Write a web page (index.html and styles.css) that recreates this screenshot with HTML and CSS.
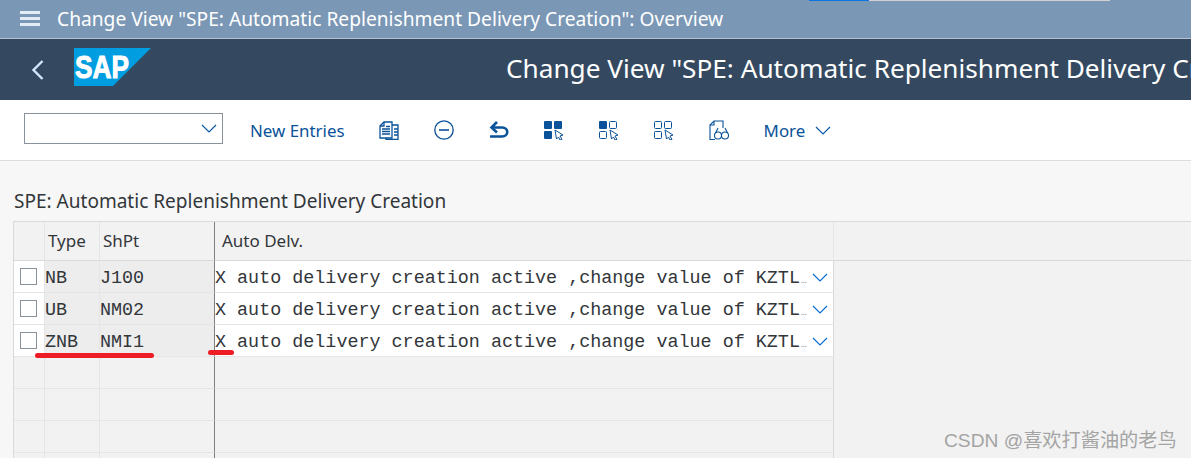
FILE: index.html
```html
<!DOCTYPE html>
<html lang="en">
<head>
  <meta charset="UTF-8">
  <meta name="viewport" content="width=device-width, initial-scale=1.0">
  <title>Change View</title>
  <link rel="stylesheet" href="styles.css">
</head>
<body>
  <div class="load-line"><span class="load-blue"></span><span class="load-gray"></span></div>

  <!-- Window title -->
  <div class="title-bar">
    <div class="burger"><span></span><span></span><span></span></div>
    <span class="title-text">Change View "SPE: Automatic Replenishment Delivery Creation": Overview</span>
  </div>

  <!-- Shell header -->
  <div class="shell">
    <svg class="back" width="14" height="20" viewBox="0 0 14 20"><path d="M11.500 1 L2.500 10 L11.500 19" fill="none" stroke="#d1e8ff" stroke-width="2.400"/></svg>
    <svg class="logo" width="77" height="38" viewBox="0 0 77 38">
      <polygon points="0,0 77,0 39,38 0,38" fill="#009de0"/>
      <text x="1" y="30" class="logo-text" textLength="54" lengthAdjust="spacingAndGlyphs">SAP</text>
    </svg>
    <div class="shell-title">Change View "SPE: Automatic Replenishment Delivery Creation": Overview</div>
  </div>

  <!-- Toolbar -->
  <div class="toolbar">
    <div class="combo">
      <svg width="16" height="9" viewBox="0 0 16 9"><path d="M1 1 L8 8 L15 1" fill="none" stroke="#0a5ca8" stroke-width="1.200"/></svg>
    </div>
    <span class="tool-link new-entries">New Entries</span>
    <svg class="tool-icon copy-icon" width="20" height="20" viewBox="0 0 20 20" fill="none" stroke="#0a5299" stroke-width="1.300">
      <path d="M1 6 L5 2 L13 2 L13 18 L1 18 Z"/><path d="M5 2 L5 6 L1 6"/>
      <path d="M13 5 L19 5 L19 19.300 L7 19.300 L7 18"/>
      <path d="M3 9 H11 M3 11.500 H11 M3 14 H11 M7 6.500 H11 M15 9 H19 M15 12 H19 M15 15 H19"/>
    </svg>
    <svg class="tool-icon minus-icon" width="20" height="20" viewBox="0 0 20 20" fill="none" stroke="#0a5299" stroke-width="1.300">
      <circle cx="10" cy="10" r="9.200"/><path d="M5 10 H15" stroke-width="1.600"/>
    </svg>
    <svg class="tool-icon undo-icon" width="20" height="20" viewBox="0 0 20 20" fill="none" stroke="#0a5299" stroke-width="2.600">
      <path d="M8 2 L2.500 7.500 L8 12.500"/><path d="M3 7.500 H13 C20 7.500 20 16.500 13 16.500 H1"/>
    </svg>
    <svg class="tool-icon" width="20" height="20" viewBox="0 0 20 20">
      <rect x="0" y="1" width="8" height="8" rx="1" fill="#0a5299"/><rect x="10" y="1" width="8" height="8" rx="1" fill="#0a5299"/><rect x="0" y="11" width="8" height="8" rx="1" fill="#0a5299"/>
      <path d="M11 10 L19 15 L16 16 L18 19.500 L16 20 L14.500 17 L12.500 19 Z" fill="#fff" stroke="#0a5299"/>
    </svg>
    <svg class="tool-icon" width="20" height="20" viewBox="0 0 20 20">
      <rect x="0" y="1" width="8" height="8" rx="1" fill="#0a5299"/><rect x="10.500" y="1.500" width="7" height="7" rx="1" fill="none" stroke="#0a5299"/><rect x="0.500" y="11.500" width="7" height="7" rx="1" fill="none" stroke="#0a5299"/>
      <path d="M11 10 L19 15 L16 16 L18 19.500 L16 20 L14.500 17 L12.500 19 Z" fill="#fff" stroke="#0a5299"/>
    </svg>
    <svg class="tool-icon" width="20" height="20" viewBox="0 0 20 20">
      <rect x="0.500" y="1.500" width="7" height="7" rx="1" fill="none" stroke="#0a5299"/><rect x="10.500" y="1.500" width="7" height="7" rx="1" fill="none" stroke="#0a5299"/><rect x="0.500" y="11.500" width="7" height="7" rx="1" fill="none" stroke="#0a5299"/>
      <path d="M11 10 L19 15 L16 16 L18 19.500 L16 20 L14.500 17 L12.500 19 Z" fill="#fff" stroke="#0a5299"/>
    </svg>
    <svg class="tool-icon" width="20" height="20" viewBox="0 0 20 20" fill="none" stroke="#0a5299" stroke-width="1.100">
      <path d="M6 19.500 H1 V5 L5 1 H14 V8"/><path d="M1 5 H5 V1"/>
      <circle cx="9" cy="15.500" r="3.500"/><circle cx="16" cy="15.500" r="3.500"/><path d="M6.500 13 L9 8 M18.500 13 L16 8 M12 15 H13"/>
    </svg>
    <span class="tool-link more">More</span>
    <svg class="more-arrow" width="16" height="9" viewBox="0 0 16 9"><path d="M1 1 L8 8 L15 1" fill="none" stroke="#0a5ca8" stroke-width="1.200"/></svg>
  </div>

  <!-- Table area -->
  <div class="content">
    <h1 class="table-title">SPE: Automatic Replenishment Delivery Creation</h1>
    <div class="table">
      <div class="row head">
        <div class="cell sel"></div>
        <div class="cell type">Type</div>
        <div class="cell shpt">ShPt</div>
        <div class="cell auto">Auto Delv.</div>
        <div class="cell rest"></div>
      </div>
      <div class="row data">
        <div class="cell sel"><span class="check"></span></div>
        <div class="cell type">NB</div>
        <div class="cell shpt">J100</div>
        <div class="cell auto"><span class="val">X auto delivery creation active ,change value of KZTL<span class="dots">...</span></span><svg width="16" height="9" viewBox="0 0 16 9"><path d="M1 1 L8 8 L15 1" fill="none" stroke="#0a6ed1" stroke-width="1.200"/></svg></div>
        <div class="cell rest"></div>
      </div>
      <div class="row data">
        <div class="cell sel"><span class="check"></span></div>
        <div class="cell type">UB</div>
        <div class="cell shpt">NM02</div>
        <div class="cell auto"><span class="val">X auto delivery creation active ,change value of KZTL<span class="dots">...</span></span><svg width="16" height="9" viewBox="0 0 16 9"><path d="M1 1 L8 8 L15 1" fill="none" stroke="#0a6ed1" stroke-width="1.200"/></svg></div>
        <div class="cell rest"></div>
      </div>
      <div class="row data">
        <div class="cell sel"><span class="check"></span></div>
        <div class="cell type">ZNB</div>
        <div class="cell shpt">NMI1</div>
        <div class="cell auto"><span class="val">X auto delivery creation active ,change value of KZTL<span class="dots">...</span></span><svg width="16" height="9" viewBox="0 0 16 9"><path d="M1 1 L8 8 L15 1" fill="none" stroke="#0a6ed1" stroke-width="1.200"/></svg></div>
        <div class="cell rest"></div>
      </div>
      <div class="row empty"><div class="cell sel"></div><div class="cell type"></div><div class="cell shpt"></div><div class="cell auto"></div><div class="cell rest"></div></div>
      <div class="row empty"><div class="cell sel"></div><div class="cell type"></div><div class="cell shpt"></div><div class="cell auto"></div><div class="cell rest"></div></div>
      <div class="row empty"><div class="cell sel"></div><div class="cell type"></div><div class="cell shpt"></div><div class="cell auto"></div><div class="cell rest"></div></div>
      <div class="row empty last"><div class="cell sel"></div><div class="cell type"></div><div class="cell shpt"></div><div class="cell auto"></div><div class="cell rest"></div></div>
    </div>
  </div>

  <!-- Red hand-drawn marks and watermark lie over the table -->
  <span class="mark mark-long"></span>
  <span class="mark mark-short"></span>
  <span class="watermark">CSDN @喜欢打酱油的老鸟</span>
</body>
</html>
```

FILE: styles.css
```css
* {
  box-sizing: border-box;
}

html, body {
  margin: 0;
  height: 458px;
  overflow: hidden;
}

body {
  position: relative;
  font-family: "Noto Sans", "Open Sans", sans-serif;
  background: #f7f7f7;
  color: #32363a;
}

/* Top line */
.load-line {
  position: absolute;
  top: 0;
  left: 809px;
  display: flex;
  height: 1px;
}

.load-blue {
  width: 60px;
  background: #0a78e0;
}

.load-gray {
  width: 241px;
  background: #d0d0d0;
}

.title-bar {
  height: 39px;
  display: flex;
  align-items: center;
  padding-left: 20px;
  padding-bottom: 1px;
  background: #7b97b6;
  border-bottom: 1px solid #b4c3d5;
  color: #fff;
}

.burger {
  display: flex;
  flex-direction: column;
  gap: 3px;
  width: 20px;
}

.burger span {
  height: 3px;
  background: #e3ebf4;
}

.title-text {
  margin-left: 17px;
  font-size: 19.200px;
  white-space: nowrap;
}

.shell {
  height: 61px;
  display: flex;
  align-items: center;
  background: #34495f;
  overflow: hidden;
}

.back {
  margin-left: 31px;
  flex-shrink: 0;
}

.logo {
  margin-left: 29px;
  margin-bottom: 5px;
  flex-shrink: 0;
}

.logo-text {
  font-family: "Liberation Sans", sans-serif;
  font-weight: bold;
  font-size: 32px;
  fill: #fff;
  stroke: #fff;
  stroke-width: 1px;
}

.shell-title {
  margin-left: 355px;
  padding-bottom: 4px;
  font-size: 26.200px;
  color: #fff;
  white-space: nowrap;
}

.toolbar {
  height: 61px;
  display: flex;
  align-items: center;
  background: #fff;
  border-bottom: 1px solid #dcdcdc;
  padding-left: 24px;
}

.combo {
  width: 199px;
  height: 31px;
  margin-bottom: 4px;
  display: flex;
  align-items: center;
  justify-content: flex-end;
  padding-right: 5px;
  border: 1px solid #89919a;
}

.tool-link {
  font-size: 16.900px;
  color: #0a5299;
}

.new-entries {
  margin-left: 27px;
  margin-right: 34px;
}

.tool-icon {
  margin-right: 35px;
  flex-shrink: 0;
}

.more-arrow {
  margin-left: 10px;
}

.content {
  padding-top: 28px;
}

.table-title {
  margin: 0 0 8px 14px;
  font-size: 19.050px;
  font-weight: 400;
  line-height: 24px;
  color: #32363a;
}

.table {
  margin-left: 13px;
  border-top: 1px solid #d9d9d9;
  border-left: 1px solid #d9d9d9;
}

.row {
  display: grid;
  grid-template-columns: 30px 55px 115px 620px 1fr;
  height: 32px;
}

.row.head {
  height: 39px;
  background: #f2f2f2;
}

.row.empty {
  background: #f2f2f2;
}

.row.last {
  height: 5px;
}

.row.last .cell {
  border-bottom: none;
}

.cell {
  display: flex;
  align-items: center;
  overflow: hidden;
  white-space: nowrap;
  border-bottom: 1px solid #e5e5e5;
}

.head .cell {
  font-size: 17px;
  padding-bottom: 2px;
  border-bottom-color: #d9d9d9;
}

.head .type {
  padding-left: 3px;
  border-left: 1px solid #e5e5e5;
}

.head .shpt {
  padding-left: 3px;
  border-left: 1px solid #e5e5e5;
}

.head .auto {
  padding-left: 7px;
  border-left: 1px solid #808080;
  border-right: 1px solid #e5e5e5;
}

.data .cell {
  font-family: "Liberation Mono", monospace;
  font-size: 18.400px;
}

.data .sel {
  background: #fff;
  padding-left: 6px;
}

.check {
  width: 17px;
  height: 17px;
  background: #fff;
  border: 1px solid #89919a;
}

.data .type {
  background: #ededed;
  padding-top: 4px;
  border-left: 1px solid #e5e5e5;
}

.data .shpt {
  background: #ededed;
  padding-top: 4px;
  border-left: 1px solid #e5e5e5;
}

.data .auto {
  justify-content: space-between;
  background: #fff;
  padding-right: 5px;
  padding-top: 4px;
  border-left: 1px solid #808080;
  border-right: 1px solid #d9d9d9;
}

.data .auto svg {
  margin-top: -2px;
}

.val {
  white-space: nowrap;
}

.dots {
  font-size: 6px;
  letter-spacing: -1.500px;
}

.rest,
.data .rest {
  background: #f2f2f2;
  border-bottom: none;
}

.empty .type,
.empty .shpt {
  border-left: 1px solid #e5e5e5;
}

.empty .auto {
  border-left: 1px solid #808080;
  border-right: 1px solid #d9d9d9;
}

.head .rest {
  border-bottom: 1px solid #d9d9d9;
}

.mark {
  position: absolute;
  height: 5px;
  border-radius: 3px;
  background: #ee1c25;
}

.mark-long {
  left: 35px;
  top: 353px;
  width: 119px;
}

.mark-short {
  left: 208px;
  top: 350px;
  width: 26px;
}

.watermark {
  position: absolute;
  left: 944px;
  top: 425px;
  font-family: "Liberation Sans", "Noto Sans CJK SC", sans-serif;
  font-size: 19.200px;
  color: #a4a4a4;
  white-space: nowrap;
}
```
